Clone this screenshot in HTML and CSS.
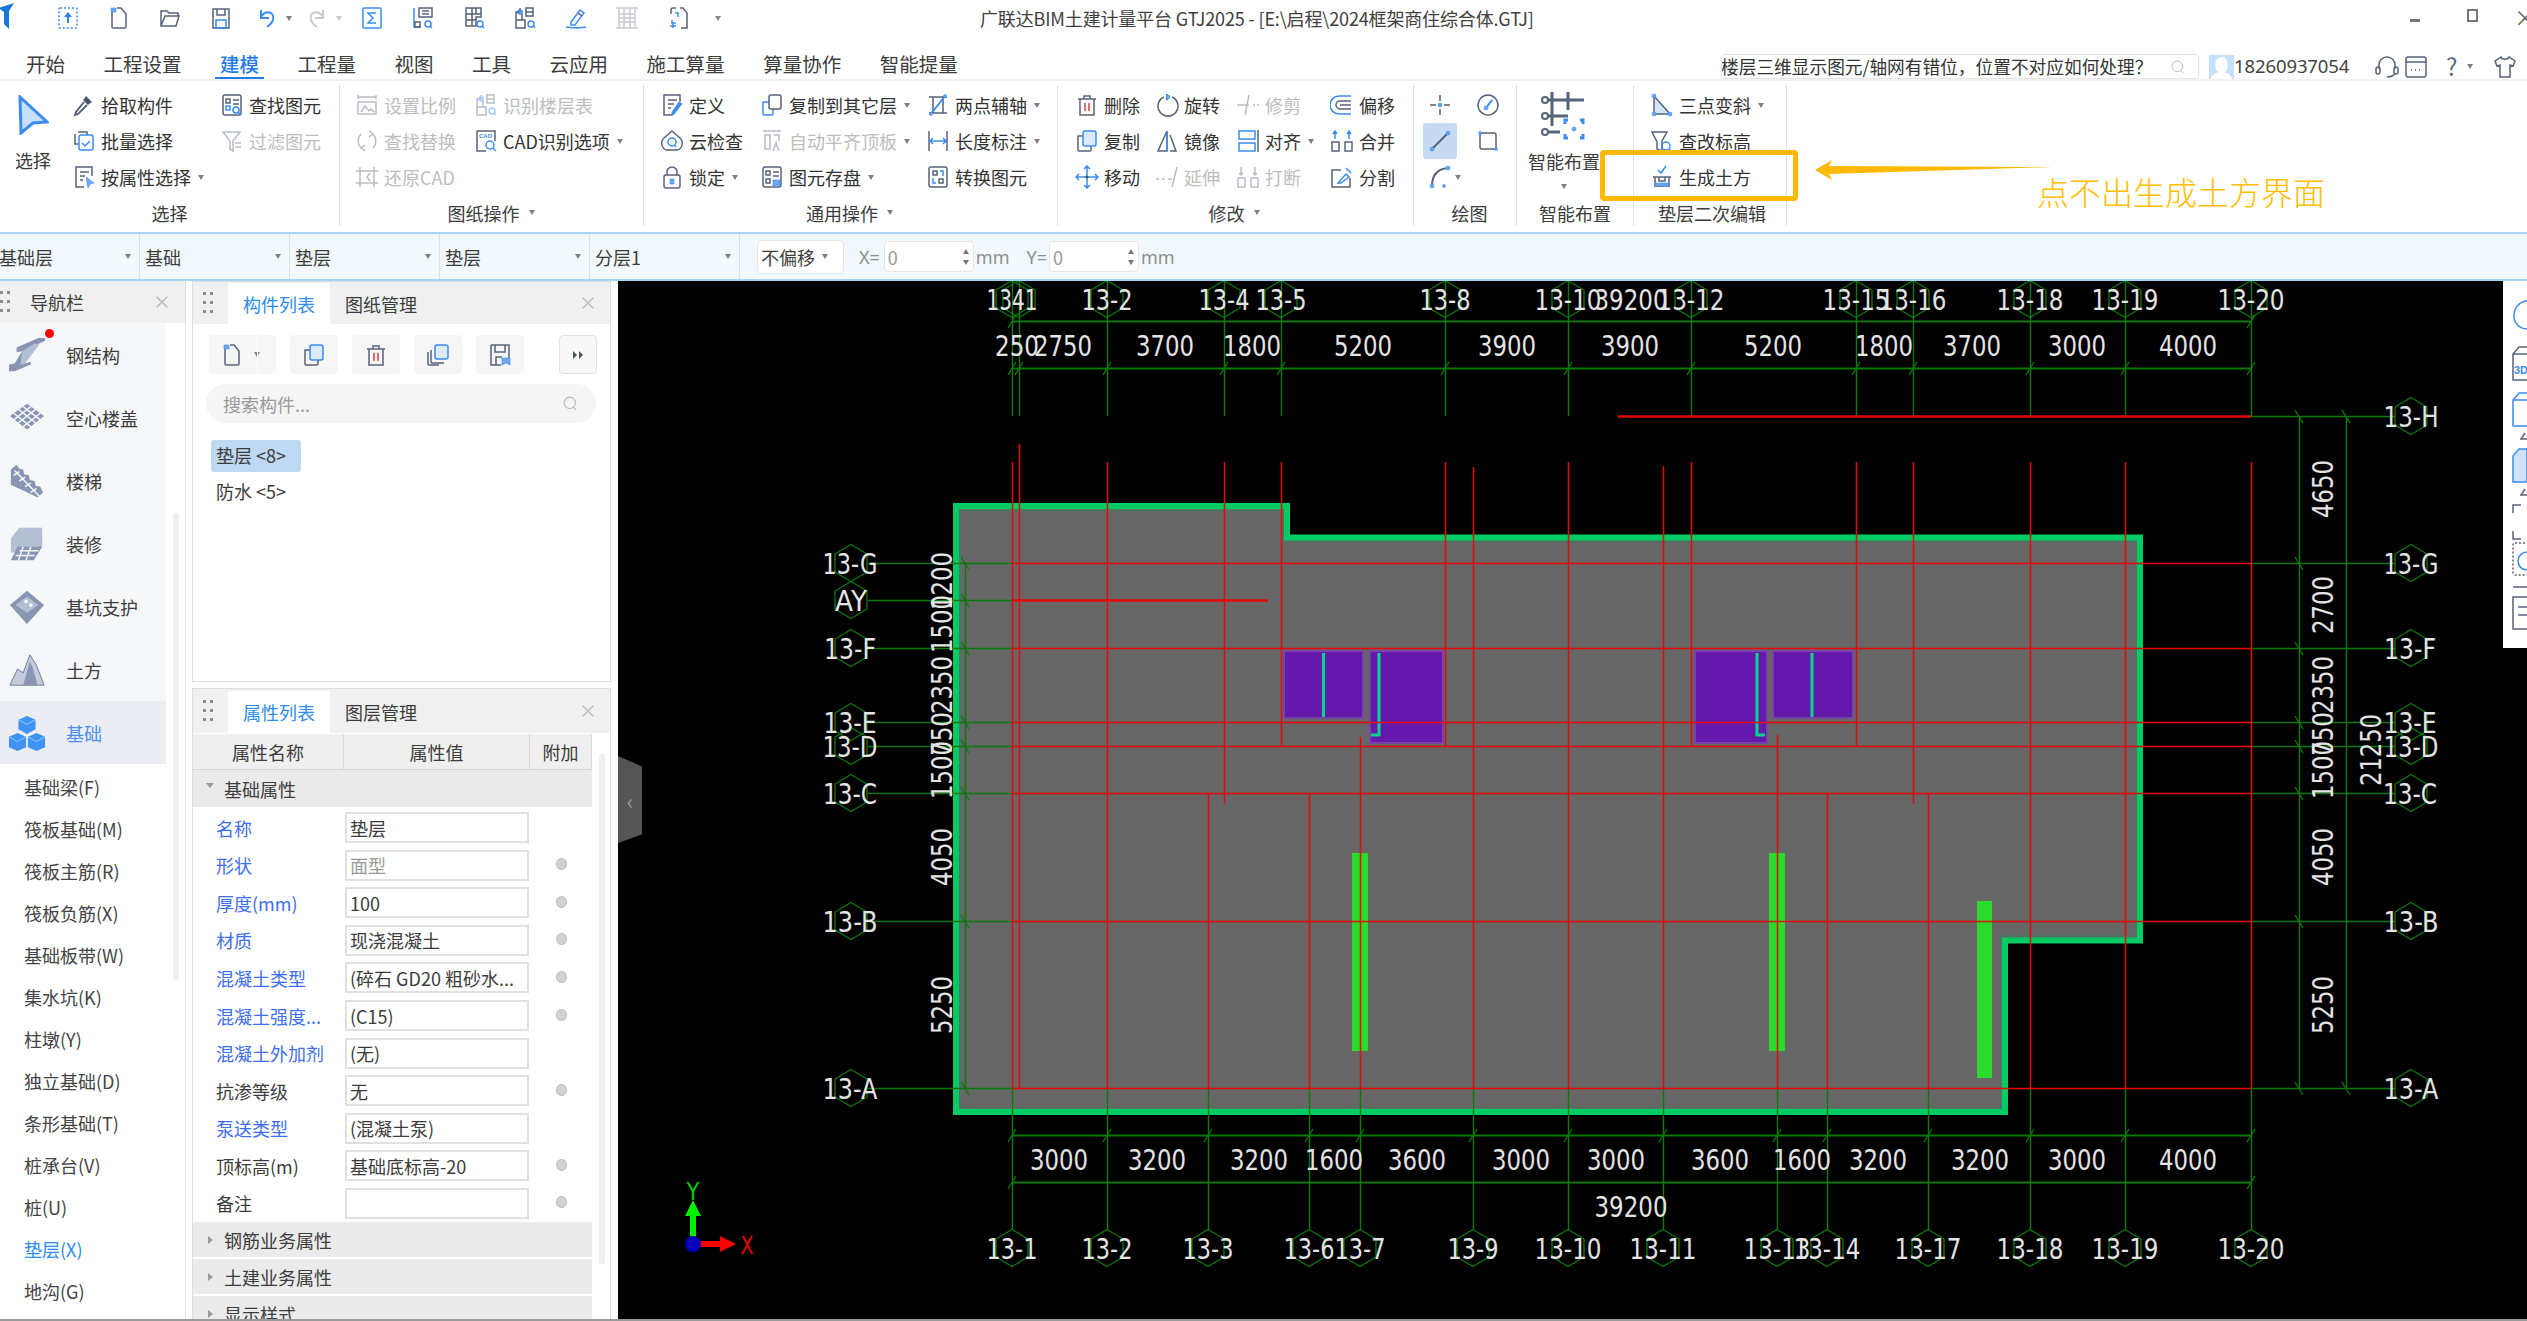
FILE: index.html
```html
<!DOCTYPE html>
<html lang="zh-CN">
<head>
<meta charset="utf-8">
<title>广联达BIM土建计量平台 GTJ2025</title>
<link rel="stylesheet" href="styles.css">
</head>
<body>
<svg class="sprite" aria-hidden="true">
  <symbol id="up" viewBox="0 0 24 24"><rect class="b dash" x="3" y="2" width="18" height="20" rx="1"/><path class="bf" d="M12 6l4 5h-3v6h-2v-6H8z"/></symbol>
  <symbol id="newdoc" viewBox="0 0 24 24"><path class="s" d="M5 4v17a1 1 0 0 0 1 1h12a1 1 0 0 0 1-1V8l-5-6h-4"/><path class="bd" d="M4 2h5v4H4z"/></symbol>
  <symbol id="folder" viewBox="0 0 24 24"><path class="s" d="M3 20V5h6l2 2h9v3M3 20h15l3-10H7z"/></symbol>
  <symbol id="save" viewBox="0 0 24 24"><path class="s" d="M4 3h16v19H4zM8 3v6h8V3"/><rect class="b" x="7" y="14" width="10" height="8"/></symbol>
  <symbol id="undo" viewBox="0 0 24 24"><path class="b w2" d="M6 4v8h8M6 11c5-8 14-5 12 3-1 3-3 5-6 7"/></symbol>
  <symbol id="redo" viewBox="0 0 24 24"><path class="l w2" d="M18 4v8h-8M18 11c-5-8-14-5-12 3 1 3 3 5 6 7"/></symbol>
  <symbol id="sigma" viewBox="0 0 24 24"><rect class="b" x="3" y="2" width="18" height="20" rx="1"/><path class="b" d="M16 7H8l5 5-5 5h8"/></symbol>
  <symbol id="tblq" viewBox="0 0 24 24"><path class="b" d="M3 2v19h7"/><path class="s" d="M8 2h13v9H8zM11 5h7M11 8h7"/><circle class="b" cx="17" cy="18" r="3"/><path class="b" d="M19 20l2 2"/><rect class="s" x="4" y="16" width="5" height="5"/></symbol>
  <symbol id="gridq" viewBox="0 0 24 24"><path class="s" d="M4 2h15v9h-5v9H4zM4 8h15M10 2v18M14 2v6M4 14h10"/><circle class="b" cx="18" cy="18" r="3"/><path class="b" d="M20 20l2 2"/></symbol>
  <symbol id="cadq" viewBox="0 0 24 24"><path class="s" d="M13 2h7v8h-7zM13 6h7M3 14h9v8H3zM7 2v4H3v8M9 7v7"/><circle class="b" cx="18" cy="18" r="3"/><path class="b" d="M20 20l2 2"/><circle class="b" cx="7" cy="6" r="2"/></symbol>
  <symbol id="pen" viewBox="0 0 24 24"><path class="b" d="M2 21c4 1 16 1 20 0M7 16l9-12 4 3-9 12H7z"/><path class="s" d="M14 7l4 3"/></symbol>
  <symbol id="ladder" viewBox="0 0 24 24"><path class="l" d="M4 2v20M20 2v20M1 2h22M1 22h22M4 8h16M4 12h16M4 16h16M9 2v20M15 2v20"/></symbol>
  <symbol id="framep" viewBox="0 0 24 24"><path class="s" d="M14 2h3l4 5v15h-6M5 8V4a2 2 0 0 1 2-2h3"/><path class="b" d="M9 7h3v4M10 17H6v-3M4 20h6M7 17v5"/></symbol>
  <symbol id="cursor" viewBox="0 0 32 40"><path class="bf2" d="M3 2l27 25-14 1L4 38z"/></symbol>
  <symbol id="pick" viewBox="0 0 24 24"><path class="dk" d="M14 3l6 6-3 2-1 1-5-5 1-1z"/><path class="s w2" d="M12 9L4 19l-1 3 3-1 9-9"/></symbol>
  <symbol id="batch" viewBox="0 0 24 24"><path class="s" d="M6 3h9v3M3 5v10h3"/><rect class="b" x="7" y="6" width="14" height="15" rx="2"/><path class="b" d="M10 14l3 3 5-5"/></symbol>
  <symbol id="attr" viewBox="0 0 24 24"><path class="s" d="M20 11V2H4v20h8M8 7h9M8 11h5M8 15h3"/><path class="bd" d="M14 12l8 6-4 1-2 4z"/></symbol>
  <symbol id="findel" viewBox="0 0 24 24"><rect class="s" x="3" y="2" width="18" height="20" rx="2"/><path class="s" d="M13 7h6M13 11h6"/><rect class="s" x="6" y="6" width="4" height="4"/><rect class="b" x="6" y="13" width="4" height="4"/><circle class="b" cx="16" cy="17" r="3"/><path class="b" d="M18 19l3 3"/></symbol>
  <symbol id="filter" viewBox="0 0 24 24"><path class="s" d="M3 3h17l-7 9v10l-3-2v-8zM15 14h6M15 18h6"/></symbol>
  <symbol id="scale" viewBox="0 0 24 24"><path class="s" d="M3 2v4M21 2v4M3 4h18M3 9h18v12H3zM6 19l4-6 4 5 2-2 3 3"/></symbol>
  <symbol id="replace" viewBox="0 0 24 24"><path class="s" d="M6 5a10 10 0 0 0 0 14M18 5a10 10 0 0 1 0 14M14 2l4 3-4 3M10 22l-4-3 4-3"/></symbol>
  <symbol id="cadopt" viewBox="0 0 24 24"><path class="s" d="M3 2h18v10M3 2v20h9"/><text class="mini" x="5" y="9">CAD</text><circle class="b" cx="16" cy="16" r="4"/><path class="b" d="M19 19l3 3"/></symbol>
  <symbol id="restore" viewBox="0 0 24 24"><path class="s" d="M1 6h22M1 18h22M5 2v20M19 2v20M15 8l-3 4 3 4"/></symbol>
  <symbol id="def" viewBox="0 0 24 24"><path class="s" d="M20 9V2H4v20h8M8 7h9M8 11h6M8 15h3"/><path class="b w2" d="M21 11l-7 9-2 2 1-3 6-9z"/></symbol>
  <symbol id="cloud" viewBox="0 0 24 24"><path class="s" d="M12 2l8 7a7 7 0 0 1 2 7 6 6 0 0 1-5 5H7a6 6 0 0 1-5-5 7 7 0 0 1 2-7z"/><circle class="b" cx="12" cy="13" r="4"/><path class="b" d="M14 16l2 2"/></symbol>
  <symbol id="lock" viewBox="0 0 24 24"><rect class="s" x="4" y="10" width="16" height="13" rx="2"/><path class="s" d="M7 10V7a5 5 0 0 1 10 0v3"/><rect class="bd" x="10" y="14" width="4" height="5"/></symbol>
  <symbol id="copyto" viewBox="0 0 24 24"><path class="b" d="M9 9H3v12a1 1 0 0 0 1 1h8a1 1 0 0 0 1-1v-5"/><rect class="s" x="9" y="2" width="12" height="14" rx="2"/></symbol>
  <symbol id="autoalign" viewBox="0 0 24 24"><path class="s" d="M3 2h18M5 6h5v14H5zM14 6h5v6M13 22l3-8 3 8"/></symbol>
  <symbol id="store" viewBox="0 0 24 24"><rect class="s" x="3" y="2" width="18" height="20" rx="2"/><path class="s" d="M13 7h6M13 11h6"/><rect class="s" x="6" y="6" width="4" height="4"/><rect class="s" x="6" y="14" width="4" height="4"/><path class="bd" d="M13 15h7v7l-3-2-4 2z"/></symbol>
  <symbol id="twopt" viewBox="0 0 24 24"><path class="s" d="M3 4h18M3 20h18M7 4v16M17 4v16"/><path class="b w2" d="M4 22L20 2"/><circle class="bd" cx="5" cy="21" r="1.5"/><circle class="bd" cx="19" cy="3" r="1.5"/></symbol>
  <symbol id="dimlen" viewBox="0 0 24 24"><path class="s" d="M3 2v20"/><path class="s" d="M21 2v20"/><path class="b" d="M4 12h16M7 9l-3 3 3 3M17 9l3 3-3 3"/></symbol>
  <symbol id="convert" viewBox="0 0 24 24"><rect class="s" x="3" y="2" width="18" height="20" rx="2"/><path class="s" d="M7 6h4v4H7zM13 14h4v4h-4z"/><path class="b" d="M14 6h3v5M10 18H7v-5"/></symbol>
  <symbol id="del" viewBox="0 0 24 24"><path class="s" d="M5 6h14v16H5zM3 6h18M9 6V3h6v3"/><path class="r" d="M10 10v8M14 10v8"/></symbol>
  <symbol id="copy" viewBox="0 0 24 24"><path class="s" d="M8 7H3v14a1 1 0 0 0 1 1h11a1 1 0 0 0 1-1v-4"/><rect class="bl" x="8" y="2" width="13" height="15" rx="2"/></symbol>
  <symbol id="copy2" viewBox="0 0 24 24"><path class="s" d="M2 9v12a1 1 0 0 0 1 1h10M5 7v12a1 1 0 0 0 1 1h12"/><rect class="bl" x="9" y="2" width="13" height="14" rx="2"/></symbol>
  <symbol id="savecopy" viewBox="0 0 24 24"><path class="s" d="M3 2h18v13M3 2v20h10M7 2v7h10V2M8 22v-8h6"/><path class="bd" d="M14 15h8v7l-4-2-4 2z"/></symbol>
  <symbol id="move" viewBox="0 0 24 24"><path class="b" d="M12 1v22M1 12h22M9 4l3-3 3 3M9 20l3 3 3-3M4 9l-3 3 3 3M20 9l3 3-3 3"/><circle class="dk" cx="12" cy="12" r="1.5"/></symbol>
  <symbol id="rotate" viewBox="0 0 24 24"><path class="s" d="M9 4a10 10 0 1 0 8 0"/><path class="b w2" d="M12 1v6"/><circle class="bd" cx="13" cy="4" r="2"/></symbol>
  <symbol id="mirror" viewBox="0 0 24 24"><path class="s" d="M12 2L3 22h9zM15 6l6 16h-6"/><path class="b" d="M12 2v20"/></symbol>
  <symbol id="extend" viewBox="0 0 24 24"><path class="s" d="M1 14h3M7 14h3M13 14h4M22 2L17 22"/></symbol>
  <symbol id="trim" viewBox="0 0 24 24"><path class="s" d="M1 12h12M17 12h2M21 12h2M13 2L9 22"/></symbol>
  <symbol id="align" viewBox="0 0 24 24"><rect class="b" x="3" y="2" width="16" height="8"/><rect class="b" x="3" y="14" width="16" height="8"/><path class="s" d="M22 1v22"/></symbol>
  <symbol id="brk" viewBox="0 0 24 24"><rect class="s" x="2" y="13" width="7" height="9"/><rect class="s" x="15" y="13" width="7" height="9"/><path class="s" d="M5 2v8M3 8l2 2 2-2M19 2v8M17 8l2 2 2-2"/></symbol>
  <symbol id="offset" viewBox="0 0 24 24"><path class="b" d="M21 3H9a9 9 0 0 0 0 18h12"/><path class="s" d="M21 8H10a4 4 0 0 0 0 8h11M10 12h11"/></symbol>
  <symbol id="merge" viewBox="0 0 24 24"><rect class="s" x="2" y="13" width="7" height="9"/><rect class="s" x="15" y="13" width="7" height="9"/><path class="b" d="M5 2v8M3 5l2-3 2 3M19 2v8M17 5l2-3 2 3"/></symbol>
  <symbol id="split" viewBox="0 0 24 24"><path class="s" d="M11 5H2v17h18v-9"/><path class="b" d="M8 18l8-9 3 3-8 6zM16 3l5 5"/></symbol>
  <symbol id="pt" viewBox="0 0 24 24"><path class="s" d="M12 2v6M12 16v6M2 12h6M16 12h6"/><circle class="bd" cx="12" cy="12" r="2"/></symbol>
  <symbol id="dial" viewBox="0 0 24 24"><circle class="s" cx="12" cy="12" r="10"/><path class="b w2" d="M10 15l6-8"/><circle class="bd" cx="10" cy="15" r="2"/></symbol>
  <symbol id="line" viewBox="0 0 24 24"><path class="s w2" d="M4 20L20 4"/><circle class="bd" cx="20" cy="4" r="2"/><circle class="bd" cx="4" cy="20" r="2"/></symbol>
  <symbol id="rect" viewBox="0 0 24 24"><rect class="s" x="4" y="4" width="16" height="16" rx="2"/><circle class="bd" cx="4" cy="4" r="1.5"/><circle class="bd" cx="20" cy="20" r="1.5"/></symbol>
  <symbol id="arc" viewBox="0 0 24 24"><path class="s w2" d="M4 21C4 11 9 4 20 3"/><circle class="bd" cx="20" cy="3" r="2"/><circle class="bd" cx="4" cy="21" r="2"/><circle class="bd" cx="16" cy="21" r="1.5"/></symbol>
  <symbol id="smart" viewBox="0 0 48 50"><path class="s w3" d="M12 2v34M28 2v18M8 10h36M8 26h20M8 42h12"/><circle class="s w2" cx="5" cy="10" r="3"/><circle class="s w2" cx="5" cy="26" r="3"/><circle class="s w2" cx="5" cy="42" r="3"/><path class="b w3" d="M28 30h-3v4M40 30h3v4M28 48h-3v-4M40 48h3v-4"/><circle class="bd" cx="34" cy="39" r="2"/></symbol>
  <symbol id="slope3" viewBox="0 0 24 24"><path class="f0" d="M4 3l16 18H4z"/><path class="s" d="M4 3v18h16L4 3"/><circle class="bd" cx="4" cy="3" r="2"/><circle class="bd" cx="4" cy="21" r="2"/><circle class="bd" cx="20" cy="21" r="2"/></symbol>
  <symbol id="elev" viewBox="0 0 24 24"><path class="s" d="M2 3h15l-5 9v10l-5-2v-7z"/><circle class="b" cx="16" cy="17" r="4"/><path class="b" d="M19 20l2 2"/></symbol>
  <symbol id="earth" viewBox="0 0 24 24"><path class="b" d="M8 5l3 3 5-7"/><path class="s" d="M3 12h18M5 12v9h14v-9"/><path class="s" d="M9 12v4h6v-4"/><path class="bd" d="M5 18h14v3H5z"/></symbol>
  <symbol id="headset" viewBox="0 0 24 24"><path class="s" d="M4 14V10a8 8 0 0 1 16 0v4M12 22c5 0 8-2 8-4"/><rect class="s" x="1" y="12" width="4" height="7" rx="2"/><rect class="s" x="19" y="12" width="4" height="7" rx="2"/></symbol>
  <symbol id="cal" viewBox="0 0 24 24"><rect class="s" x="2" y="2" width="20" height="20" rx="2"/><path class="s" d="M2 7h20M7 15h1M11 15h1M15 15h1"/></symbol>
  <symbol id="shirt" viewBox="0 0 24 24"><path class="s" d="M8 2L2 6l2 5 3-1v12h10V10l3 1 2-5-6-4c-1 3-7 3-8 0z"/></symbol>
  <symbol id="searchi" viewBox="0 0 24 24"><circle class="g" cx="11" cy="11" r="8"/><path class="g" d="M16 17l4 4"/></symbol>
  <symbol id="closei" viewBox="0 0 24 24"><path class="g w2" d="M4 4l16 16M20 4L4 20"/></symbol>
  <symbol id="dots" viewBox="0 0 12 24"><path class="dotf" d="M1 1h3v3H1zM8 1h3v3H8zM1 10h3v3H1zM8 10h3v3H8zM1 19h3v3H1zM8 19h3v3H8z"/></symbol>
  <symbol id="ffwd" viewBox="0 0 12 10"><path class="dk" d="M1 1l4 4-4 4zM7 1l4 4-4 4z"/></symbol>
  <symbol id="beam" viewBox="0 0 40 40"><path class="nav" d="M1 37V30l6-1 8-13-6 1v-5L32 2l7 0v3l-6 3-3 1-13 20 7-2v3L7 37z"/><path class="nav2" d="M15 16l13-8 5 1-16 21-4 0z"/></symbol>
  <symbol id="hollow" viewBox="0 0 40 40"><path class="nav" d="M20 5L38 18 20 32 2 18z"/><path class="gridw" d="M11 11l18 14M16 8l18 14M6 15l18 14M29 11L11 25M24 8L6 22M34 15L16 29"/></symbol>
  <symbol id="stairs" viewBox="0 0 40 40"><path class="nav" d="M3 8l6-5 3 4 4 1 1 5 5 1 1 5 5 1 1 5 5 1 3 6-6 5-28-13z"/><path class="gridw" d="M7 9l26 27M12 10l-6 4M18 16l-6 4M24 22l-6 4M30 28l-6 4"/></symbol>
  <symbol id="wallfin" viewBox="0 0 40 40"><path class="nav2" d="M12 3h24v20l-8 6H3V14z"/><path class="nav" d="M10 23h26l-9 14H3z"/><path class="gridw" d="M12 27h20M8 32h20M16 23l-5 14M24 23l-5 14"/></symbol>
  <symbol id="pit" viewBox="0 0 40 40"><path class="nav" d="M20 3l18 15-18 20L2 18z"/><path class="nav2" d="M8 18l12-9 12 9-12 8z"/><circle class="dotw" cx="19" cy="14" r="2"/><circle class="dotw" cx="24" cy="18" r="2"/></symbol>
  <symbol id="mount" viewBox="0 0 40 40"><path class="nav3" d="M2 36l8-17 6 4 7-19 7 11 8 21z"/><path class="nav" d="M16 36l7-25 3 6 5 19z"/></symbol>
  <symbol id="cubes" viewBox="0 0 40 40"><path class="cb" d="M20 2l9 4v10l-9 5-9-5V6z"/><path class="cb" d="M10 20l9 4v11l-9 4-9-4V24z"/><path class="cb" d="M30 20l9 4v11l-9 4-9-4V24z"/><path class="cw" d="M11 6l9 5 9-5M1 24l9 5 9-5M21 24l9 5 9-5"/></symbol>
</svg>

<div class="app">
  <div class="titlebar">
    <div class="quick">
      <svg class="logo" viewBox="0 0 24 32"><path class="logof" d="M0 6l16-5-5 8v18L6 22V10z"/></svg>
      <svg class="qi"><use href="#up"/></svg>
      <svg class="qi"><use href="#newdoc"/></svg>
      <svg class="qi"><use href="#folder"/></svg>
      <svg class="qi q-save"><use href="#save"/></svg>
      <svg class="qi q-tight"><use href="#undo"/></svg><i class="caret c-undo"></i>
      <svg class="qi q-tight"><use href="#redo"/></svg><i class="caret lite c-redo"></i>
      <svg class="qi"><use href="#sigma"/></svg>
      <svg class="qi"><use href="#tblq"/></svg>
      <svg class="qi"><use href="#gridq"/></svg>
      <svg class="qi"><use href="#cadq"/></svg>
      <svg class="qi"><use href="#pen"/></svg>
      <svg class="qi"><use href="#ladder"/></svg>
      <svg class="qi"><use href="#framep"/></svg>
      <i class="caret more"></i>
    </div>
    <div class="apptitle">广联达BIM土建计量平台 GTJ2025 - [E:\启程\2024框架商住综合体.GTJ]</div>
    <div class="winctl">
      <i class="wmin"></i><i class="wrest"></i><i class="wclose">×</i>
    </div>
  </div>

  <div class="tabsrow">
    <nav class="tabs">
      <a>开始</a><a>工程设置</a><a class="on">建模</a><a>工程量</a><a>视图</a><a>工具</a><a>云应用</a><a>施工算量</a><a>算量协作</a><a>智能提量</a>
    </nav>
    <div class="topsearch"><span>楼层三维显示图元/轴网有错位，位置不对应如何处理？</span><svg class="sic"><use href="#searchi"/></svg></div>
    <svg class="avatar" viewBox="0 0 25 24"><rect class="av1" width="25" height="24"/><path class="av2" d="M12.500 2a6 6 0 0 1 6 6v4a6 6 0 0 1-12 0V8a6 6 0 0 1 6-6zM2 24c1-6 6-7 10-7s10 1 11 7z"/></svg>
    <span class="userid">18260937054</span>
    <svg class="ti"><use href="#headset"/></svg>
    <svg class="ti"><use href="#cal"/></svg>
    <span class="help">?</span><i class="caret"></i>
    <svg class="ti shirtm"><use href="#shirt"/></svg>
    <i class="chev"></i>
  </div>

  <div class="ribbon">
    <section class="group g1">
      <div class="gbody">
        <div class="bigbtn b-select"><svg class="cur"><use href="#cursor"/></svg><span>选择</span></div>
        <div class="col w148">
          <div class="item"><svg class="ic"><use href="#pick"/></svg><span>拾取构件</span></div>
          <div class="item"><svg class="ic"><use href="#batch"/></svg><span>批量选择</span></div>
          <div class="item"><svg class="ic"><use href="#attr"/></svg><span>按属性选择</span><i class="caret"></i></div>
        </div>
        <div class="col">
          <div class="item"><svg class="ic"><use href="#findel"/></svg><span>查找图元</span></div>
          <div class="item off"><svg class="ic"><use href="#filter"/></svg><span>过滤图元</span></div>
        </div>
      </div>
      <div class="glabel">选择</div>
    </section>
    <section class="group g2">
      <div class="gbody">
        <div class="col w119">
          <div class="item off"><svg class="ic"><use href="#scale"/></svg><span>设置比例</span></div>
          <div class="item off"><svg class="ic"><use href="#replace"/></svg><span>查找替换</span></div>
          <div class="item off"><svg class="ic"><use href="#restore"/></svg><span>还原CAD</span></div>
        </div>
        <div class="col">
          <div class="item off"><svg class="ic"><use href="#cadq"/></svg><span>识别楼层表</span></div>
          <div class="item"><svg class="ic"><use href="#cadopt"/></svg><span>CAD识别选项</span><i class="caret"></i></div>
        </div>
      </div>
      <div class="glabel">图纸操作<i class="caret"></i></div>
    </section>
    <section class="group g3">
      <div class="gbody">
        <div class="col w100">
          <div class="item"><svg class="ic"><use href="#def"/></svg><span>定义</span></div>
          <div class="item"><svg class="ic"><use href="#cloud"/></svg><span>云检查</span></div>
          <div class="item"><svg class="ic"><use href="#lock"/></svg><span>锁定</span><i class="caret"></i></div>
        </div>
        <div class="col w166">
          <div class="item"><svg class="ic"><use href="#copyto"/></svg><span>复制到其它层</span><i class="caret"></i></div>
          <div class="item off"><svg class="ic"><use href="#autoalign"/></svg><span>自动平齐顶板</span><i class="caret"></i></div>
          <div class="item"><svg class="ic"><use href="#store"/></svg><span>图元存盘</span><i class="caret"></i></div>
        </div>
        <div class="col">
          <div class="item"><svg class="ic"><use href="#twopt"/></svg><span>两点辅轴</span><i class="caret"></i></div>
          <div class="item"><svg class="ic"><use href="#dimlen"/></svg><span>长度标注</span><i class="caret"></i></div>
          <div class="item"><svg class="ic"><use href="#convert"/></svg><span>转换图元</span></div>
        </div>
      </div>
      <div class="glabel">通用操作<i class="caret"></i></div>
    </section>
    <section class="group g4">
      <div class="gbody">
        <div class="col w80">
          <div class="item"><svg class="ic"><use href="#del"/></svg><span>删除</span></div>
          <div class="item"><svg class="ic"><use href="#copy"/></svg><span>复制</span></div>
          <div class="item"><svg class="ic"><use href="#move"/></svg><span>移动</span></div>
        </div>
        <div class="col w81">
          <div class="item"><svg class="ic"><use href="#rotate"/></svg><span>旋转</span></div>
          <div class="item"><svg class="ic"><use href="#mirror"/></svg><span>镜像</span></div>
          <div class="item off"><svg class="ic"><use href="#extend"/></svg><span>延伸</span></div>
        </div>
        <div class="col w94">
          <div class="item off"><svg class="ic"><use href="#trim"/></svg><span>修剪</span></div>
          <div class="item"><svg class="ic"><use href="#align"/></svg><span>对齐</span><i class="caret"></i></div>
          <div class="item off"><svg class="ic"><use href="#brk"/></svg><span>打断</span></div>
        </div>
        <div class="col">
          <div class="item"><svg class="ic"><use href="#offset"/></svg><span>偏移</span></div>
          <div class="item"><svg class="ic"><use href="#merge"/></svg><span>合并</span></div>
          <div class="item"><svg class="ic"><use href="#split"/></svg><span>分割</span></div>
        </div>
      </div>
      <div class="glabel">修改<i class="caret"></i></div>
    </section>
    <section class="group g5">
      <div class="gbody">
        <div class="col w48">
          <div class="item tool"><svg class="ic"><use href="#pt"/></svg></div>
          <div class="item tool active"><svg class="ic"><use href="#line"/></svg></div>
          <div class="item tool"><svg class="ic"><use href="#arc"/></svg><i class="caret"></i></div>
        </div>
        <div class="col">
          <div class="item tool"><svg class="ic"><use href="#dial"/></svg></div>
          <div class="item tool"><svg class="ic"><use href="#rect"/></svg></div>
        </div>
      </div>
      <div class="glabel">绘图</div>
    </section>
    <section class="group g6">
      <div class="gbody">
        <div class="bigbtn b-smart"><svg class="sm"><use href="#smart"/></svg><span>智能布置</span><i class="caret"></i></div>
      </div>
      <div class="glabel">智能布置</div>
    </section>
    <section class="group g7">
      <div class="gbody">
        <div class="col">
          <div class="item"><svg class="ic"><use href="#slope3"/></svg><span>三点变斜</span><i class="caret"></i></div>
          <div class="item"><svg class="ic"><use href="#elev"/></svg><span>查改标高</span></div>
          <div class="item"><svg class="ic"><use href="#earth"/></svg><span>生成土方</span></div>
        </div>
      </div>
      <div class="glabel">垫层二次编辑</div>
    </section>
  </div>

  <div class="selbar">
    <div class="cell first"><span>基础层</span><i class="caret"></i></div>
    <div class="cell"><span>基础</span><i class="caret"></i></div>
    <div class="cell"><span>垫层</span><i class="caret"></i></div>
    <div class="cell"><span>垫层</span><i class="caret"></i></div>
    <div class="cell"><span>分层1</span><i class="caret"></i></div>
    <div class="dropbox"><span>不偏移</span><i class="caret"></i></div>
    <span class="xy xl">X=</span>
    <div class="spin"><span>0</span><b class="arrows"></b></div>
    <span class="xy">mm</span>
    <span class="xy yl">Y=</span>
    <div class="spin sy"><span>0</span><b class="arrows"></b></div>
    <span class="xy">mm</span>
  </div>

  <div class="main">
    <aside class="navpanel">
      <div class="phead nav-head">
        <svg class="drag"><use href="#dots"/></svg><span class="navtitle">导航栏</span><svg class="pclose"><use href="#closei"/></svg>
      </div>
      <div class="navbody">
        <div class="navcol">
          <div class="cat"><svg class="caticon"><use href="#beam"/></svg><span>钢结构</span><i class="reddot"></i></div>
          <div class="cat"><svg class="caticon"><use href="#hollow"/></svg><span>空心楼盖</span></div>
          <div class="cat"><svg class="caticon"><use href="#stairs"/></svg><span>楼梯</span></div>
          <div class="cat"><svg class="caticon"><use href="#wallfin"/></svg><span>装修</span></div>
          <div class="cat"><svg class="caticon"><use href="#pit"/></svg><span>基坑支护</span></div>
          <div class="cat"><svg class="caticon"><use href="#mount"/></svg><span>土方</span></div>
          <div class="cat on"><svg class="caticon"><use href="#cubes"/></svg><span>基础</span></div>
          <ul class="sublist">
            <li>基础梁(F)</li><li>筏板基础(M)</li><li>筏板主筋(R)</li><li>筏板负筋(X)</li><li>基础板带(W)</li><li>集水坑(K)</li><li>柱墩(Y)</li><li>独立基础(D)</li><li>条形基础(T)</li><li>桩承台(V)</li><li>桩(U)</li><li class="on">垫层(X)</li><li>地沟(G)</li>
          </ul>
        </div>
        <div class="navscroll"></div>
      </div>
    </aside>

    <div class="midcol">
      <section class="panel listpanel">
        <div class="phead">
          <svg class="drag"><use href="#dots"/></svg>
          <span class="ptab on">构件列表</span><span class="ptab">图纸管理</span>
          <svg class="pclose"><use href="#closei"/></svg>
        </div>
        <div class="ptools">
          <div class="tbtn split"><svg><use href="#newdoc"/></svg><b></b><i class="caret"></i></div>
          <div class="tbtn"><svg><use href="#copy"/></svg></div>
          <div class="tbtn"><svg><use href="#del"/></svg></div>
          <div class="tbtn"><svg><use href="#copy2"/></svg></div>
          <div class="tbtn"><svg><use href="#savecopy"/></svg></div>
          <div class="tbtn morebtn"><svg class="ffw"><use href="#ffwd"/></svg></div>
        </div>
        <div class="psearch"><span>搜索构件...</span><svg><use href="#searchi"/></svg></div>
        <div class="plist">
          <div class="pli sel">垫层 &lt;8&gt;</div>
          <div class="pli">防水 &lt;5&gt;</div>
        </div>
      </section>

      <section class="panel proppanel">
        <div class="phead ph2">
          <svg class="drag"><use href="#dots"/></svg>
          <span class="ptab on">属性列表</span><span class="ptab">图层管理</span>
          <svg class="pclose"><use href="#closei"/></svg>
        </div>
        <div class="propwrap">
          <div class="proptable">
            <div class="thead"><span class="th1">属性名称</span><span class="th2">属性值</span><span class="th3">附加</span></div>
            <div class="pgroup first"><i class="tri down"></i>基础属性</div>
            <div class="prop"><span class="pn lk">名称</span><span class="pv">垫层</span></div>
            <div class="prop"><span class="pn lk">形状</span><span class="pv dim">面型</span><i class="dot"></i></div>
            <div class="prop"><span class="pn lk">厚度(mm)</span><span class="pv">100</span><i class="dot"></i></div>
            <div class="prop"><span class="pn lk">材质</span><span class="pv">现浇混凝土</span><i class="dot"></i></div>
            <div class="prop"><span class="pn lk">混凝土类型</span><span class="pv">(碎石 GD20 粗砂水...</span><i class="dot"></i></div>
            <div class="prop"><span class="pn lk">混凝土强度...</span><span class="pv">(C15)</span><i class="dot"></i></div>
            <div class="prop"><span class="pn lk">混凝土外加剂</span><span class="pv">(无)</span></div>
            <div class="prop"><span class="pn">抗渗等级</span><span class="pv">无</span><i class="dot"></i></div>
            <div class="prop"><span class="pn lk">泵送类型</span><span class="pv">(混凝土泵)</span></div>
            <div class="prop"><span class="pn">顶标高(m)</span><span class="pv">基础底标高-20</span><i class="dot"></i></div>
            <div class="prop"><span class="pn">备注</span><span class="pv"></span><i class="dot"></i></div>
            <div class="pgroup"><i class="tri"></i>钢筋业务属性</div>
            <div class="pgroup"><i class="tri"></i>土建业务属性</div>
            <div class="pgroup"><i class="tri"></i>显示样式</div>
          </div>
          <div class="propscroll"></div>
        </div>
      </section>
    </div>

    <div class="canvas">
      <svg class="drawing" viewBox="618 281 1909 1038" width="1909" height="1038">
        <defs>
          <path id="hx" class="hex" d="M0-18.500L16-9V9L0 18.500L-16 9V-9z"/>
        </defs>
        <path class="slab" d="M956 506H1287V537.500H2140V940.500H2005V1112H956z"/>
        <path class="slabin" d="M960 510H1283V541H2136V936H2001V1108H960z"/>
        <g class="purple">
          <rect x="1284" y="651" width="79" height="67"/>
          <rect x="1370" y="651" width="73" height="92"/>
          <rect x="1695" y="651" width="72" height="92"/>
          <rect x="1773" y="651" width="80" height="67"/>
        </g>
        <path class="teal" d="M1323.500 653V717M1379 653V735H1371M1757 653V735H1765M1812 653V717"/>
        <g class="bars">
          <rect x="1352" y="853" width="16" height="198"/>
          <rect x="1769" y="853" width="16" height="198"/>
          <rect x="1977" y="901" width="15" height="177"/>
        </g>

        <path class="grn" d="M1012.500 281V416M1019.500 281V416M1107.500 281V416M1224.500 281V416M1281.500 281V416M1445.500 281V416M1568.500 281V416M1691.500 281V416M1856.500 281V416M1913.500 281V416M2030.500 281V416M2125.500 281V416M2251.500 281V416"/>
        <path class="grn thick" d="M1012 321.500H2251M1012 368.500H2251M1012 1135.500H2251M1012 1182.500H2251"/>
        <path class="grn" d="M1012.500 1088V1230M1107.500 1088V1230M1208.500 1088V1230M1309.500 1088V1230M1360.500 1088V1230M1473.500 1088V1230M1568.500 1088V1230M1663.500 1088V1230M1777.500 1088V1230M1827.500 1088V1230M1928.500 1088V1230M2030.500 1088V1230M2125.500 1088V1230M2251.500 1088V1230"/>
        <path class="grn" d="M868 563.500H1012M868 600.500H1012M868 648.500H1012M868 722.500H1012M868 746.500H1012M868 793.500H1012M868 921.500H1012M868 1088.500H1012"/>
        <path class="grn" d="M2251 416.500H2395M2251 563.500H2395M2251 648.500H2395M2251 722.500H2395M2251 746.500H2395M2251 793.500H2395M2251 921.500H2395M2251 1088.500H2395"/>
        <path class="grn" d="M965.500 563V1088M2299.500 416V1088M2346.500 416V1088"/>
        <path class="grn" d="M1008 328l8-13M2247 328l8-13M1008 375l8-13M1015 375l8-13M1103 375l8-13M1220 375l8-13M1277 375l8-13M1441 375l8-13M1564 375l8-13M1687 375l8-13M1852 375l8-13M1909 375l8-13M2026 375l8-13M2121 375l8-13M2247 375l8-13M1008 1142l8-13M1103 1142l8-13M1204 1142l8-13M1305 1142l8-13M1356 1142l8-13M1469 1142l8-13M1564 1142l8-13M1659 1142l8-13M1773 1142l8-13M1823 1142l8-13M1924 1142l8-13M2026 1142l8-13M2121 1142l8-13M2247 1142l8-13M1008 1189l8-13M2247 1189l8-13M961 557l8 13M961 594l8 13M961 642l8 13M961 716l8 13M961 740l8 13M961 787l8 13M961 915l8 13M961 1082l8 13M2295 410l8 13M2295 557l8 13M2295 642l8 13M2295 716l8 13M2295 740l8 13M2295 787l8 13M2295 915l8 13M2295 1082l8 13M2342 410l8 13M2342 1082l8 13"/>

        <path class="red" d="M1012.500 462V1088M1019.500 444V1088M1107.500 462V1088M1224.500 462V804M1281.500 462V746M1445.500 462V746M1473.500 467V1088M1568.500 462V1088M1663.500 466V1088M1691.500 462V746M1856.500 462V746M1913.500 462V804M2030.500 462V1088M2125.500 462V1088M2251.500 462V1088M1360.500 737V1088M1777.500 735V1088M1208.500 793V1088M1309.500 793V1088M1827.500 793V1088M1928.500 793V1088"/>
        <path class="red" d="M1012 563.500H2251M1012 648.500H2251M1012 722.500H2251M1012 746.500H2251M1012 793.500H2251M1012 921.500H2251M1012 1088.500H2251"/>
        <path class="red w2" d="M1012 600.500H1268M1618 416.500H2251"/>

        <g>
          <use href="#hx" x="1012" y="299"/><use href="#hx" x="1019" y="299"/><use href="#hx" x="1107" y="299"/><use href="#hx" x="1224" y="299"/><use href="#hx" x="1281" y="299"/><use href="#hx" x="1445" y="299"/><use href="#hx" x="1568" y="299"/><use href="#hx" x="1691" y="299"/><use href="#hx" x="1856" y="299"/><use href="#hx" x="1913" y="299"/><use href="#hx" x="2030" y="299"/><use href="#hx" x="2125" y="299"/><use href="#hx" x="2251" y="299"/>
          <use href="#hx" x="1012" y="1248"/><use href="#hx" x="1107" y="1248"/><use href="#hx" x="1208" y="1248"/><use href="#hx" x="1309" y="1248"/><use href="#hx" x="1360" y="1248"/><use href="#hx" x="1473" y="1248"/><use href="#hx" x="1568" y="1248"/><use href="#hx" x="1663" y="1248"/><use href="#hx" x="1777" y="1248"/><use href="#hx" x="1827" y="1248"/><use href="#hx" x="1928" y="1248"/><use href="#hx" x="2030" y="1248"/><use href="#hx" x="2125" y="1248"/><use href="#hx" x="2251" y="1248"/>
          <use href="#hx" x="851" y="563"/><use href="#hx" x="851" y="600"/><use href="#hx" x="851" y="648"/><use href="#hx" x="851" y="722"/><use href="#hx" x="851" y="746"/><use href="#hx" x="851" y="793"/><use href="#hx" x="851" y="921"/><use href="#hx" x="851" y="1088"/>
          <use href="#hx" x="2411" y="416"/><use href="#hx" x="2411" y="563"/><use href="#hx" x="2411" y="648"/><use href="#hx" x="2411" y="722"/><use href="#hx" x="2411" y="746"/><use href="#hx" x="2411" y="793"/><use href="#hx" x="2411" y="921"/><use href="#hx" x="2411" y="1088"/>
        </g>

        <g class="lbl">
          <text x="1012" y="310" textLength="51" lengthAdjust="spacingAndGlyphs">1341</text>
          <text x="1107" y="310" textLength="51" lengthAdjust="spacingAndGlyphs">13-2</text>
          <text x="1224" y="310" textLength="51" lengthAdjust="spacingAndGlyphs">13-4</text>
          <text x="1281" y="310" textLength="51" lengthAdjust="spacingAndGlyphs">13-5</text>
          <text x="1445" y="310" textLength="51" lengthAdjust="spacingAndGlyphs">13-8</text>
          <text x="1568" y="310" textLength="67" lengthAdjust="spacingAndGlyphs">13-10</text>
          <text x="1631" y="310" textLength="73" lengthAdjust="spacingAndGlyphs">39200</text>
          <text x="1691" y="310" textLength="67" lengthAdjust="spacingAndGlyphs">13-12</text>
          <text x="1856" y="310" textLength="67" lengthAdjust="spacingAndGlyphs">13-15</text>
          <text x="1913" y="310" textLength="67" lengthAdjust="spacingAndGlyphs">13-16</text>
          <text x="2030" y="310" textLength="67" lengthAdjust="spacingAndGlyphs">13-18</text>
          <text x="2125" y="310" textLength="67" lengthAdjust="spacingAndGlyphs">13-19</text>
          <text x="2251" y="310" textLength="67" lengthAdjust="spacingAndGlyphs">13-20</text>

          <text x="1017" y="356" textLength="44" lengthAdjust="spacingAndGlyphs">250</text>
          <text x="1063" y="356" textLength="58" lengthAdjust="spacingAndGlyphs">2750</text>
          <text x="1165" y="356" textLength="58" lengthAdjust="spacingAndGlyphs">3700</text>
          <text x="1252" y="356" textLength="58" lengthAdjust="spacingAndGlyphs">1800</text>
          <text x="1363" y="356" textLength="58" lengthAdjust="spacingAndGlyphs">5200</text>
          <text x="1507" y="356" textLength="58" lengthAdjust="spacingAndGlyphs">3900</text>
          <text x="1630" y="356" textLength="58" lengthAdjust="spacingAndGlyphs">3900</text>
          <text x="1773" y="356" textLength="58" lengthAdjust="spacingAndGlyphs">5200</text>
          <text x="1884" y="356" textLength="58" lengthAdjust="spacingAndGlyphs">1800</text>
          <text x="1972" y="356" textLength="58" lengthAdjust="spacingAndGlyphs">3700</text>
          <text x="2077" y="356" textLength="58" lengthAdjust="spacingAndGlyphs">3000</text>
          <text x="2188" y="356" textLength="58" lengthAdjust="spacingAndGlyphs">4000</text>

          <text x="1059" y="1170" textLength="58" lengthAdjust="spacingAndGlyphs">3000</text>
          <text x="1157" y="1170" textLength="58" lengthAdjust="spacingAndGlyphs">3200</text>
          <text x="1259" y="1170" textLength="58" lengthAdjust="spacingAndGlyphs">3200</text>
          <text x="1334" y="1170" textLength="58" lengthAdjust="spacingAndGlyphs">1600</text>
          <text x="1417" y="1170" textLength="58" lengthAdjust="spacingAndGlyphs">3600</text>
          <text x="1521" y="1170" textLength="58" lengthAdjust="spacingAndGlyphs">3000</text>
          <text x="1616" y="1170" textLength="58" lengthAdjust="spacingAndGlyphs">3000</text>
          <text x="1720" y="1170" textLength="58" lengthAdjust="spacingAndGlyphs">3600</text>
          <text x="1802" y="1170" textLength="58" lengthAdjust="spacingAndGlyphs">1600</text>
          <text x="1878" y="1170" textLength="58" lengthAdjust="spacingAndGlyphs">3200</text>
          <text x="1980" y="1170" textLength="58" lengthAdjust="spacingAndGlyphs">3200</text>
          <text x="2077" y="1170" textLength="58" lengthAdjust="spacingAndGlyphs">3000</text>
          <text x="2188" y="1170" textLength="58" lengthAdjust="spacingAndGlyphs">4000</text>
          <text x="1631" y="1217" textLength="73" lengthAdjust="spacingAndGlyphs">39200</text>

          <text x="1012" y="1259" textLength="51" lengthAdjust="spacingAndGlyphs">13-1</text>
          <text x="1107" y="1259" textLength="51" lengthAdjust="spacingAndGlyphs">13-2</text>
          <text x="1208" y="1259" textLength="51" lengthAdjust="spacingAndGlyphs">13-3</text>
          <text x="1309" y="1259" textLength="51" lengthAdjust="spacingAndGlyphs">13-6</text>
          <text x="1360" y="1259" textLength="51" lengthAdjust="spacingAndGlyphs">13-7</text>
          <text x="1473" y="1259" textLength="51" lengthAdjust="spacingAndGlyphs">13-9</text>
          <text x="1568" y="1259" textLength="67" lengthAdjust="spacingAndGlyphs">13-10</text>
          <text x="1663" y="1259" textLength="67" lengthAdjust="spacingAndGlyphs">13-11</text>
          <text x="1777" y="1259" textLength="67" lengthAdjust="spacingAndGlyphs">13-13</text>
          <text x="1827" y="1259" textLength="67" lengthAdjust="spacingAndGlyphs">13-14</text>
          <text x="1928" y="1259" textLength="67" lengthAdjust="spacingAndGlyphs">13-17</text>
          <text x="2030" y="1259" textLength="67" lengthAdjust="spacingAndGlyphs">13-18</text>
          <text x="2125" y="1259" textLength="67" lengthAdjust="spacingAndGlyphs">13-19</text>
          <text x="2251" y="1259" textLength="67" lengthAdjust="spacingAndGlyphs">13-20</text>

          <text x="850" y="574" textLength="55" lengthAdjust="spacingAndGlyphs">13-G</text>
          <text x="851" y="611" textLength="32" lengthAdjust="spacingAndGlyphs">AY</text>
          <text x="850" y="659" textLength="52" lengthAdjust="spacingAndGlyphs">13-F</text>
          <text x="850" y="733" textLength="53" lengthAdjust="spacingAndGlyphs">13-E</text>
          <text x="850" y="757" textLength="55" lengthAdjust="spacingAndGlyphs">13-D</text>
          <text x="850" y="804" textLength="54" lengthAdjust="spacingAndGlyphs">13-C</text>
          <text x="850" y="932" textLength="55" lengthAdjust="spacingAndGlyphs">13-B</text>
          <text x="850" y="1099" textLength="55" lengthAdjust="spacingAndGlyphs">13-A</text>

          <text x="2411" y="427" textLength="55" lengthAdjust="spacingAndGlyphs">13-H</text>
          <text x="2411" y="574" textLength="55" lengthAdjust="spacingAndGlyphs">13-G</text>
          <text x="2410" y="659" textLength="52" lengthAdjust="spacingAndGlyphs">13-F</text>
          <text x="2410" y="733" textLength="53" lengthAdjust="spacingAndGlyphs">13-E</text>
          <text x="2411" y="757" textLength="55" lengthAdjust="spacingAndGlyphs">13-D</text>
          <text x="2410" y="804" textLength="54" lengthAdjust="spacingAndGlyphs">13-C</text>
          <text x="2411" y="932" textLength="55" lengthAdjust="spacingAndGlyphs">13-B</text>
          <text x="2411" y="1099" textLength="55" lengthAdjust="spacingAndGlyphs">13-A</text>

          <text transform="translate(952 581) rotate(-90)" textLength="58" lengthAdjust="spacingAndGlyphs">1200</text>
          <text transform="translate(952 624) rotate(-90)" textLength="58" lengthAdjust="spacingAndGlyphs">1500</text>
          <text transform="translate(952 685) rotate(-90)" textLength="58" lengthAdjust="spacingAndGlyphs">2350</text>
          <text transform="translate(952 734) rotate(-90)" textLength="44" lengthAdjust="spacingAndGlyphs">750</text>
          <text transform="translate(952 770) rotate(-90)" textLength="58" lengthAdjust="spacingAndGlyphs">1500</text>
          <text transform="translate(952 857) rotate(-90)" textLength="58" lengthAdjust="spacingAndGlyphs">4050</text>
          <text transform="translate(952 1005) rotate(-90)" textLength="58" lengthAdjust="spacingAndGlyphs">5250</text>

          <text transform="translate(2333 489) rotate(-90)" textLength="58" lengthAdjust="spacingAndGlyphs">4650</text>
          <text transform="translate(2333 605) rotate(-90)" textLength="58" lengthAdjust="spacingAndGlyphs">2700</text>
          <text transform="translate(2333 685) rotate(-90)" textLength="58" lengthAdjust="spacingAndGlyphs">2350</text>
          <text transform="translate(2333 734) rotate(-90)" textLength="44" lengthAdjust="spacingAndGlyphs">750</text>
          <text transform="translate(2333 770) rotate(-90)" textLength="58" lengthAdjust="spacingAndGlyphs">1500</text>
          <text transform="translate(2333 857) rotate(-90)" textLength="58" lengthAdjust="spacingAndGlyphs">4050</text>
          <text transform="translate(2333 1005) rotate(-90)" textLength="58" lengthAdjust="spacingAndGlyphs">5250</text>
          <text transform="translate(2381 750) rotate(-90)" textLength="72" lengthAdjust="spacingAndGlyphs">21250</text>
        </g>

        <path class="gizg" d="M690 1240V1216H685L693 1200L701 1216H696V1240z"/>
        <path class="gizr" d="M698 1241H720V1236L736 1244L720 1252V1247H698z"/>
        <ellipse class="gizb" cx="693" cy="1244" rx="8" ry="8"/>
        <text class="axg" x="693" y="1200" textLength="13" lengthAdjust="spacingAndGlyphs">Y</text>
        <text class="axr" x="747" y="1254" textLength="13" lengthAdjust="spacingAndGlyphs">X</text>
      </svg>
      <div class="collapse"><span>‹</span></div>
      <div class="sidetools">
        <svg viewBox="0 0 24 367" width="24" height="367">
          <path class="b" d="M24 20a14 14 0 0 0-13 14 13 13 0 0 0 13 14"/>
          <path class="s" d="M24 66h-8l-6 7v26h14M10 73h14"/>
          <text class="mini3d" x="11" y="93">3D</text>
          <path class="b" d="M24 112h-8l-6 7v26h14M10 119h14"/>
          <path class="s" d="M22 152l-4 6h6"/>
          <path class="bl2" d="M24 168h-8l-6 7v26h14z"/>
          <path class="s" d="M22 208l-4 6h6"/>
          <path class="s" d="M18 224h-8v8M10 250v8h8"/>
          <rect class="s dash" x="10" y="262" width="20" height="32" rx="2"/>
          <circle class="b" cx="24" cy="280" r="9"/>
          <path class="s" d="M10 306h14M10 316h20v32H10zM15 326h9M15 334h9"/>
        </svg>
      </div>
    </div>
  </div>

  <div class="callout"></div>
  <svg class="callarrow" viewBox="0 0 240 24" width="240" height="24"><path class="arrowf" d="M0 12L17 2L14 8L238 9L14 16L17 22z"/></svg>
  <div class="calltext">点不出生成土方界面</div>
</div>
</body>
</html>
```
FILE: styles.css
```css
* { box-sizing: border-box; }
html, body { margin: 0; padding: 0; background: #fff; }
body {
  width: 2527px; height: 1321px; overflow: hidden;
  font-family: "Noto Sans CJK SC", "Noto Sans", sans-serif;
  font-size: 18px; color: #3c3c3c; line-height: 1;
}
.sprite { display: none; }
.app { position: relative; width: 2527px; height: 1321px; display: flex; flex-direction: column; overflow: hidden; }
i { font-style: normal; }

/* shared svg paint classes */
.s, .b, .l, .r, .g { fill: none; stroke-width: 1.5; }
.s { stroke: #566379; }
.b { stroke: #3b8cf0; }
.l { stroke: #c8ccd2; }
.r { stroke: #e23b3b; }
.g { stroke: #b9b9b9; }
.w2 { stroke-width: 2; }
.w3 { stroke-width: 3; }
.dash { stroke-dasharray: 2 2; }
.bf { fill: #2f83ea; stroke: none; }
.bd { fill: #6aa8f3; stroke: #3b8cf0; stroke-width: .6; }
.bl { fill: #dbe9fb; stroke: #3b8cf0; stroke-width: 1.5; }
.bl2 { fill: #cfe2fa; stroke: #3b8cf0; stroke-width: 1.5; }
.bf2 { fill: #c7dff9; stroke: #3b8cf0; stroke-width: 3; }
.f0 { fill: #d6e6fa; stroke: none; }
.dk { fill: #4a5568; stroke: none; }
.mini { font: 700 6px "Liberation Sans", sans-serif; fill: #3b8cf0; }
.mini3d { font: 700 11px "Liberation Sans", sans-serif; fill: #3b8cf0; }
.dotf { fill: #8d8d8d; }
.nav { fill: #8895b3; }
.nav2 { fill: #b5bfd3; }
.nav3 { fill: #c3cbdc; stroke: #6e7b99; stroke-width: 1; }
.gridw { fill: none; stroke: #f6f7f9; stroke-width: 1.6; }
.dotw { fill: #f6f7f9; }
.cb { fill: #3f93f5; }
.cw { fill: none; stroke: #9ccaff; stroke-width: 1; }
.logof { fill: #1677d8; }
.av1 { fill: #c4e0fb; }
.av2 { fill: #fff; }

/* title bar */
.titlebar { height: 36px; display: flex; align-items: center; flex: none; }
.quick { width: 980px; display: flex; align-items: center; height: 36px; flex: none; }
.logo { width: 24px; height: 32px; margin-right: 34px; margin-left: -2px; flex: none; }
.qi { width: 24px; height: 24px; margin-right: 27px; flex: none; }
.qi.q-save { margin-right: 22px; }
.qi.q-tight { margin-right: 7px; }
.quick .caret { margin-left: 0; }
.quick .c-undo { margin-right: 13px; }
.quick .c-redo { margin-right: 18px; }
.quick .caret.more { margin-left: -2px; border-top-color: #888; }
.apptitle { font-size: 18px; color: #404040; letter-spacing: -.15px; white-space: nowrap; }
.winctl { margin-left: auto; display: flex; align-items: center; height: 36px; }
.wmin { width: 10px; height: 3px; background: #777; margin-right: 47px; margin-top: 4px; }
.wrest { width: 11px; height: 13px; border: 2px solid #777; margin-right: 36px; margin-top: -6px; }
.wclose { font-size: 22px; color: #666; width: 13px; margin-top: -4px; }

/* tabs row */
.tabsrow { height: 45px; display: flex; align-items: center; flex: none; border-bottom: 2px solid #f2f2f2; position: relative; overflow: hidden; }
.tabs { width: 1721px; flex: none; display: flex; padding-left: 26px; gap: 38.500px; height: 43px; }
.tabs a { font-size: 19.500px; color: #3c3c3c; height: 45px; line-height: 55px; white-space: nowrap; position: relative; }
.tabs a.on { color: #1f7ce8; font-weight: 500; }
.tabs a.on::after { content: ""; position: absolute; left: -5px; right: -5px; top: 41px; height: 3px; background: #1f7ce8; }
.topsearch { width: 478px; height: 25px; margin-top: 18px; border: 1px solid #e4e4e4; border-radius: 3px; flex: none; display: flex; align-items: center; overflow: hidden; position: relative; box-shadow: 0 1px 2px #eee; }
.topsearch span { font-size: 17.700px; white-space: nowrap; margin-left: -1px; color: #333; }
.sic { width: 16px; height: 16px; position: absolute; right: 12px; top: 4px; background: #fff; }
.avatar { width: 25px; height: 24px; margin: 18px 0 0 10px; flex: none; }
.userid { font-size: 18.500px; font-family: "Noto Sans", sans-serif; color: #444; width: 116px; margin-top: 18px; letter-spacing: -.1px; flex: none; }
.ti { width: 24px; height: 24px; margin-top: 18px; flex: none; margin-left: 25px; }
.ti + .ti { margin-left: 5px; }
.help { font-size: 24px; color: #5c6980; margin: 17px 3px 0 18px; }
.tabsrow .caret { margin-top: 18px; }
.shirtm { margin-left: 20px; }
.chev { width: 12px; height: 12px; border-left: 2px solid #777; border-top: 2px solid #777; transform: rotate(45deg); margin: 22px 0 0 15px; flex: none; }

/* caret */
.caret { display: inline-block; width: 0; height: 0; border-left: 3.500px solid transparent; border-right: 3.500px solid transparent; border-top: 5px solid #7f7f7f; margin-left: 7px; flex: none; }
.caret.lite { border-top-color: #c8c8c8; }

/* ribbon */
.ribbon { height: 151px; display: flex; flex: none; }
.group { margin: 4px 0 6px; border-right: 1px solid #dfdfdf; display: flex; flex-direction: column; flex: none; }
.g1 { width: 340px; }
.g2 { width: 304px; padding-left: 15px; }
.g3 { width: 414px; padding-left: 16px; }
.g4 { width: 356px; padding-left: 17px; }
.g5 { width: 103px; padding-left: 9px; }
.g6 { width: 117px; }
.g7 { width: 153px; padding-left: 16px; }
.gbody { display: flex; height: 110px; padding-top: 2px; }
.glabel { flex: 1; display: flex; align-items: center; justify-content: center; font-size: 18px; color: #3c3c3c; padding-top: 4px; }
.g2 .glabel { padding-right: 16px; }
.g3 .glabel { padding-right: 18px; }
.g4 .glabel { padding-right: 20px; }
.g7 .glabel { padding-right: 12px; }
.glabel .caret { margin-left: 9px; }
.col { display: flex; flex-direction: column; flex: none; }
.w148 { width: 148px; } .w119 { width: 119px; } .w100 { width: 100px; } .w166 { width: 166px; }
.w80 { width: 80px; } .w81 { width: 81px; } .w94 { width: 94px; } .w48 { width: 48px; }
.item { height: 36px; display: flex; align-items: center; font-size: 18px; white-space: nowrap; color: #333; }
.item .ic { width: 24px; height: 24px; margin-right: 5px; flex: none; }
.item.off { color: #bdbdbd; }
.item.off .ic { opacity: .42; }
.item.tool { width: 34px; justify-content: center; border-radius: 3px; }
.item.tool .ic { margin: 0; }
.item.tool .caret { margin-left: 3px; margin-right: -9px; }
.item.tool.active { background: #c6dbf3; }
.bigbtn { display: flex; flex-direction: column; align-items: center; flex: none; font-size: 18px; }
.b-select { width: 72px; padding: 8px 6px 0 0; }
.b-select .cur { width: 32px; height: 40px; margin-bottom: 16px; }
.b-select span { display: block; }
.b-smart { width: 94px; padding-top: 3px; }
.b-smart .sm { width: 48px; height: 50px; margin-bottom: 12px; }
.b-smart .caret { margin: 14px 0 0; }

/* selector bar */
.selbar { height: 49px; flex: none; display: flex; align-items: center; background: #f2f9fd; border-top: 2px solid #a9d3f6; border-bottom: 2px solid #a9d3f6; }
.cell { width: 150px; height: 100%; display: flex; align-items: center; border-right: 1px solid #d7e2ea; padding: 0 8px 0 5px; font-size: 18px; flex: none; }
.cell span { flex: 1; white-space: nowrap; }
.cell.first { width: 140px; padding-left: 0; }
.cell.first span { margin-left: -1px; }
.dropbox { width: 87px; height: 34px; margin-left: 17px; background: #fff; border: 1px solid #e6e6e6; border-radius: 4px; display: flex; align-items: center; padding-left: 3px; flex: none; }
.dropbox .caret { margin-left: 7px; }
.xy { color: #8d8d8d; font-size: 18px; font-family: "Noto Sans", sans-serif; flex: none; }
.xl { margin-left: 15px; }
.yl { margin-left: 17px; }
.spin { width: 90px; height: 31px; background: #fff; border: 1px solid #e6e6e6; border-radius: 4px; margin: 0 2px 0 4px; position: relative; display: flex; align-items: center; padding-left: 3px; color: #999; flex: none; }
.sy { margin-left: 2px; }
.arrows { position: absolute; right: 3px; top: 7px; width: 7px; height: 16px; }
.arrows::before, .arrows::after { content: ""; position: absolute; left: 0; border-left: 3.500px solid transparent; border-right: 3.500px solid transparent; }
.arrows::before { top: 0; border-bottom: 5px solid #777; }
.arrows::after { bottom: 0; border-top: 5px solid #777; }

/* main */
.main { flex: 1; display: flex; min-height: 0; border-bottom: 2px solid #9a9a9a; }
.phead { height: 42px; background: #f0f0f0; display: flex; align-items: center; flex: none; position: relative; }
.drag { width: 12px; height: 24px; margin-left: 9px; flex: none; }
.pclose { width: 16px; height: 16px; margin-left: auto; margin-right: 14px; flex: none; }
.navpanel { width: 186px; flex: none; border-right: 1px solid #e1e1e1; display: flex; flex-direction: column; }
.nav-head .drag { margin-left: -1px; }
.navtitle { margin-left: 19px; font-size: 18px; }
.nav-head .pclose { margin-right: 15px; }
.navbody { flex: 1; display: flex; min-height: 0; }
.navcol { width: 166px; flex: none; }
.navscroll { width: 6px; height: 467px; margin: 190px 0 0 7px; background: #f0f0f0; flex: none; border-radius: 3px; }
.cat { height: 63px; background: #f6f7f9; display: flex; align-items: center; position: relative; font-size: 18px; color: #3c3c3c; padding-left: 8px; }
.caticon { width: 38px; height: 38px; margin-right: 20px; flex: none; }
.cat.on { background: #ebedf2; color: #4a8ef0; }
.reddot { position: absolute; left: 45px; top: 6px; width: 9px; height: 9px; background: #f00; border-radius: 50%; }
.sublist { list-style: none; margin: 0; padding: 2px 0 0 24px; }
.sublist li { height: 42px; line-height: 42px; font-size: 18px; white-space: nowrap; color: #444; }
.sublist li.on { color: #2b8cf0; }

.midcol { width: 419px; margin-left: 6px; flex: none; display: flex; flex-direction: column; }
.panel { border: 1px solid #dedede; }
.listpanel { height: 401px; flex: none; }
.proppanel { margin-top: 6px; flex: 1; min-height: 0; overflow: hidden; border-bottom: 0; }
.ptab { width: 102px; height: 41px; margin-top: 1px; display: flex; align-items: center; justify-content: center; font-size: 18px; color: #3c3c3c; flex: none; }
.ptab:first-of-type { margin-left: 14px; }
.ptab.on { background: #fff; color: #2b8cf0; }
.ptools { display: flex; padding: 11px 0 0 16px; gap: 14px; }
.tbtn { width: 48px; height: 39px; background: #f6f6f6; border-radius: 4px; display: flex; align-items: center; justify-content: center; flex: none; }
.tbtn svg { width: 24px; height: 24px; flex: none; }
.tbtn svg.ffw { width: 12px; height: 10px; }
.tbtn.split { width: 67px; position: relative; justify-content: flex-start; padding-left: 11px; }
.tbtn.split b { position: absolute; left: 48px; top: 0; bottom: 0; width: 1px; background: #fff; }
.tbtn.split .caret { margin-left: 10px; }
.morebtn { width: 38px; margin-left: 21px; border: 1px solid #e2e2e2; background: #f8f8f8; }
.psearch { margin: 10px 0 0 13px; width: 390px; height: 39px; border-radius: 20px; background: #f5f5f5; display: flex; align-items: center; padding-left: 17px; color: #9a9a9a; font-size: 18px; position: relative; }
.psearch svg { width: 17px; height: 17px; position: absolute; right: 17px; top: 11px; }
.plist { padding: 17px 0 0 18px; }
.pli { height: 32px; line-height: 30px; font-size: 18px; padding: 0 5px; margin-bottom: 4px; width: 90px; border-radius: 3px; white-space: nowrap; }
.pli.sel { background: #bfd9f2; }

.ph2 { height: 44px; margin-bottom: 1px; }
.ph2 .ptab { height: 42px; }
.propwrap { display: flex; height: 590px; overflow: hidden; }
.proptable { width: 399px; flex: none; }
.propscroll { width: 6px; height: 511px; margin: 19px 0 0 7px; background: #f0f0f0; border-radius: 3px; flex: none; }
.thead { height: 36px; display: flex; background: #efefef; border-bottom: 1px solid #d8d8d8; font-size: 18px; }
.thead span { display: flex; align-items: center; justify-content: center; border-right: 1px solid #d8d8d8; }
.th1 { width: 151px; } .th2 { width: 186px; } .th3 { width: 62px; }
.pgroup { height: 35px; margin-bottom: 2px; background: #ebebeb; display: flex; align-items: center; padding-left: 31px; position: relative; font-size: 18px; white-space: nowrap; }
.pgroup.first { height: 37px; margin-bottom: 2px; }
.tri { position: absolute; left: 15px; top: 14px; border-top: 4px solid transparent; border-bottom: 4px solid transparent; border-left: 5px solid #999; }
.tri.down { top: 13px; left: 13px; border-left: 4px solid transparent; border-right: 4px solid transparent; border-top: 5px solid #999; border-bottom: 0; }
.prop { height: 37.550px; display: flex; align-items: center; font-size: 18px; }
.pn { width: 152px; padding-left: 23px; white-space: nowrap; }
.lk { color: #3d6ef5; }
.pv { width: 184px; height: 31px; border: 2px solid #e0e0e0; display: flex; align-items: center; padding-left: 3px; white-space: nowrap; overflow: hidden; flex: none; }
.pv.dim { color: #999; }
.dot { width: 11px; height: 12px; border-radius: 50%; background: #d2d2d2; border: 1px solid #bdbdbd; margin: -2px 0 0 27px; flex: none; }

/* canvas */
.canvas { flex: none; width: 1909px; margin-left: 7px; background: #000; position: relative; overflow: hidden; }
.drawing { display: block; }
.slab { fill: #666; stroke: #00cc66; stroke-width: 6; }
.slabin { fill: none; stroke: #0aa55a; stroke-width: 1; opacity: .5; }
.purple rect { fill: #6319ab; stroke: #7a41a8; stroke-width: 2; }
.teal { fill: none; stroke: #00d98a; stroke-width: 3; }
.bars rect { fill: #2bdb2b; }
.grn { fill: none; stroke: #0b7a0b; stroke-width: 1.4; }
.grn.thick { stroke-width: 2; }
.red { fill: none; stroke: #e80808; stroke-width: 1.5; }
.red.w2 { stroke-width: 2.500; }
.hex { fill: none; stroke: #0b7a0b; stroke-width: 1.3; }
.lbl text { font-family: "DejaVu Sans", sans-serif; font-size: 29px; fill: #e4e4e4; text-anchor: middle; }
.gizg { fill: #00ee00; }
.gizr { fill: #f00; }
.gizb { fill: #0000bb; }
.axg, .axr { font-family: "DejaVu Sans", sans-serif; font-size: 25px; text-anchor: middle; }
.axg { fill: #0c0; }
.axr { fill: #e00; }
.collapse { position: absolute; left: 0; top: 475px; width: 24px; height: 87px; background: #555; clip-path: polygon(0 0, 100% 12%, 100% 90%, 0 100%); display: flex; align-items: center; justify-content: center; color: #999; font-size: 22px; }
.sidetools { position: absolute; right: 0; top: 0; width: 24px; height: 367px; background: #fff; overflow: hidden; }
.sidetools svg { display: block; }

/* annotation */
.callout { position: absolute; left: 1600px; top: 150px; width: 198px; height: 51px; border: 5px solid #ffb900; border-radius: 4px; }
.callarrow { position: absolute; left: 1815px; top: 158px; }
.arrowf { fill: #ffb900; }
.calltext { position: absolute; left: 2037px; top: 172px; font-size: 32px; line-height: 38px; color: #ffbe00; font-weight: 300; white-space: nowrap; }
```
